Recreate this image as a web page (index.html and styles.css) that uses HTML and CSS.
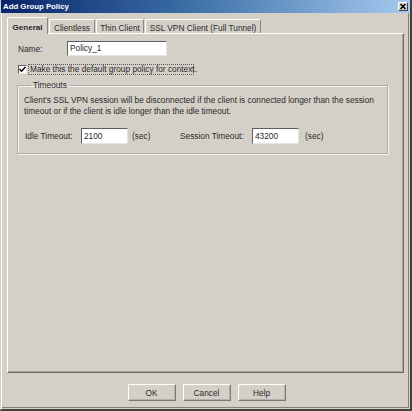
FILE: index.html
```html
<!DOCTYPE html>
<html lang="en">
<head>
<meta charset="utf-8">
<title>Add Group Policy</title>
<link rel="stylesheet" href="styles.css">
</head>
<body>
<div class="window">
  <div class="titlebar">
    <span class="title">Add Group Policy</span>
    <span class="close-btn">
      <svg width="8" height="7" viewBox="0 0 8 7"><path d="M1.5 1 L6.5 6 M6.5 1 L1.5 6" stroke="#000" stroke-width="1.5" fill="none"/></svg>
    </span>
  </div>
  <div class="body">
    <div class="tabs">
      <div class="tab tab-general active">General</div>
      <div class="tab tab-clientless">Clientless</div>
      <div class="tab tab-thin">Thin Client</div>
      <div class="tab tab-ssl">SSL VPN Client (Full Tunnel)</div>
    </div>
    <div class="panel">
      <div class="name-row">
        <label class="name-label">Name:</label>
        <div class="field name-field">Policy_1</div>
      </div>
      <div class="check-row">
        <span class="checkbox">
          <svg width="7" height="7" viewBox="0 0 7 7"><path d="M0.5 3 L2.5 5.2 L6.5 1" stroke="#000" stroke-width="1.5" fill="none"/></svg>
        </span>
        <span class="check-label">Make this the default group policy for context.</span>
      </div>
      <fieldset class="group">
        <legend>Timeouts</legend>
        <p class="note">Client's SSL VPN session will be disconnected if the client is connected longer than the session<br>timeout or if the client is idle longer than the idle timeout.</p>
        <div class="timeouts">
          <span class="lbl idle-lbl">Idle Timeout:</span>
          <div class="field short">2100</div>
          <span class="unit unit-first">(sec)</span>
          <span class="lbl session-lbl">Session Timeout:</span>
          <div class="field short">43200</div>
          <span class="unit unit-last">(sec)</span>
        </div>
      </fieldset>
    </div>
    <div class="buttons">
      <button class="btn">OK</button>
      <button class="btn">Cancel</button>
      <button class="btn">Help</button>
    </div>
  </div>
</div>
</body>
</html>
```

FILE: styles.css
```css
html, body {
  margin: 0;
  padding: 0;
}

body {
  background: #d4d0c8;
  font-family: "Liberation Sans", Arial, sans-serif;
  font-size: 8.3px;
  color: #2a2a2a;
}

/* dialog frame */
.window {
  width: 412px;
  height: 411px;
  box-sizing: border-box;
  display: flex;
  flex-direction: column;
  border-left: 1px solid #d4d0c8;
  border-right: 2px solid #404040;
  border-bottom: 2px solid #404040;
  box-shadow: inset 1px 0 0 #fff, inset -1px -1px 0 #d4d0c8, inset -2px -2px 0 #808080;
}

.titlebar {
  flex: none;
  height: 13px;
  display: flex;
  align-items: center;
  padding: 0 2px 0 2px;
  background: linear-gradient(to right, #0a246a 0%, #3a6ea5 45%, #a6caf0 100%);
}

.title {
  color: #fff;
  font-weight: bold;
  font-size: 7.8px;
  line-height: 13px;
}

.close-btn {
  margin-left: auto;
  width: 10px;
  height: 9px;
  box-sizing: border-box;
  display: flex;
  align-items: center;
  justify-content: center;
  background: #d4d0c8;
  border: 1px solid;
  border-color: #fff #404040 #404040 #fff;
}

.body {
  flex: 1;
  display: flex;
  flex-direction: column;
  padding: 4px 6px 0 6px;
}

/* tab strip */
.tabs {
  flex: none;
  height: 16px;
  display: flex;
  align-items: flex-end;
}

.tab {
  height: 14px;
  box-sizing: border-box;
  padding-top: 3px;
  line-height: 10px;
  text-align: center;
  white-space: nowrap;
  border-top: 1px solid #fff;
  border-left: 1px solid #fff;
  border-right: 1px solid #8a8780;
  border-radius: 2px 2px 0 0;
}

.tab.active {
  position: relative;
  z-index: 1;
  height: 17px;
  margin-bottom: -1px;
  padding-top: 5px;
  font-weight: bold;
  font-size: 8.1px;
  background: #d4d0c8;
}

.tab-general { width: 41px; }
.tab-clientless { width: 46px; margin-left: 1px; }
.tab-thin { width: 48px; margin-left: 1px; }
.tab-ssl { width: 116px; margin-left: 1px; }

/* page of the General tab */
.panel {
  flex: none;
  height: 340px;
  box-sizing: border-box;
  border: 1px solid;
  border-color: #fff #6e6c67 #6e6c67 #fff;
  box-shadow: inset -1px -1px 0 #a9a6a0;
  padding: 7px 0 0 10px;
}

.name-row {
  display: flex;
  align-items: center;
  height: 15px;
}

.name-label {
  width: 49px;
}

.field {
  box-sizing: border-box;
  background: #fff;
  border: 1px solid;
  border-color: #5e5e5e #e6e4de #e6e4de #5e5e5e;
  padding-left: 2px;
  white-space: nowrap;
}

.name-field {
  width: 100px;
  height: 15px;
  line-height: 13px;
}

.check-row {
  display: flex;
  align-items: center;
  height: 11px;
  margin-top: 8px;
}

.checkbox {
  width: 9px;
  height: 9px;
  box-sizing: border-box;
  display: flex;
  align-items: center;
  justify-content: center;
  background: #fff;
  border: 1px solid;
  border-color: #5a5a5a #e6e4de #e6e4de #5a5a5a;
}

.check-label {
  margin-left: 1px;
  width: 166px;
  height: 11px;
  box-sizing: border-box;
  border: 1px dotted #555;
  padding-left: 1px;
  line-height: 9px;
  white-space: nowrap;
}

/* Timeouts group */
.group {
  margin: 5px 0 0 -1px;
  width: 371px;
  min-inline-size: 0;
  box-sizing: border-box;
  padding: 5px 6px 9px 6px;
  border: 1px solid #aeaba4;
  box-shadow: 1px 1px 0 #f4f3f0, inset 1px 1px 0 #f4f3f0;
}

.group legend {
  margin-left: 7px;
  padding: 0 2px;
  line-height: 10px;
}

.note {
  margin: 0;
  line-height: 11px;
  white-space: nowrap;
}

.timeouts {
  display: flex;
  align-items: center;
  height: 16px;
  margin-top: 11px;
  padding-left: 1px;
}

.lbl {
  white-space: nowrap;
}

.idle-lbl { width: 56px; }
.session-lbl { width: 72px; }

.short {
  width: 47px;
  height: 16px;
  line-height: 14px;
}

.unit-first {
  margin-left: 4px;
  width: 48px;
}

.unit-last {
  margin-left: 6px;
}

/* dialog buttons */
.buttons {
  display: flex;
  justify-content: center;
  gap: 7px;
  padding: 11px 0 0 2px;
}

.btn {
  width: 48px;
  height: 17px;
  padding: 0;
  margin: 0;
  font: inherit;
  color: #2a2a2a;
  background: #d4d0c8;
  border: 1px solid;
  border-color: #fff #7c7a75 #7c7a75 #fff;
  box-shadow: inset -1px -1px 0 #b4b1aa;
}
```
